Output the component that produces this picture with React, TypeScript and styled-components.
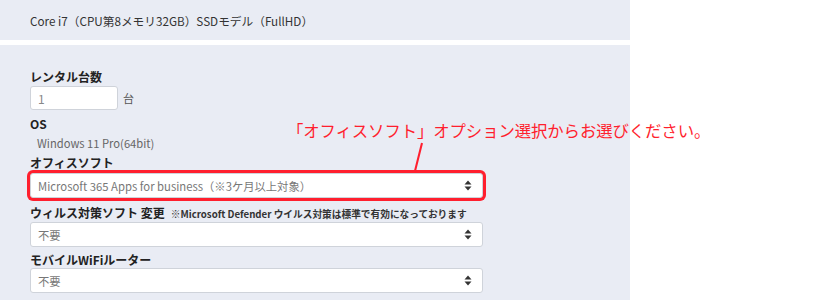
import React from "react";
import styled, { createGlobalStyle } from "styled-components";

const GlobalStyle = createGlobalStyle`
  html, body {
    margin: 0;
    padding: 0;
    background: #ffffff;
  }
  body {
    font-family: "Noto Sans CJK JP", "Noto Sans", sans-serif;
    color: #333;
  }
`;

const Page = styled.div`
  position: relative;
  width: 840px;
  height: 300px;
  overflow: hidden;
`;

const Panel = styled.section<{ $first?: boolean }>`
  width: 630px;
  box-sizing: border-box;
  background: #e9ecf4;
  margin-bottom: 5px;
  ${(p) =>
    p.$first
      ? `height: 40px; display: flex; align-items: center; padding: 0 30px;`
      : `padding: 24px 30px 20px;`}
`;

const ModelName = styled.div`
  font-size: 11.7px;
  color: #333;
`;

const Form = styled.div`
  display: flex;
  flex-direction: column;
`;

const Label = styled.div<{ $top?: number }>`
  font-size: 12px;
  font-weight: 700;
  line-height: 16px;
  color: #222;
  margin-top: ${(p) => p.$top ?? 0}px;
  display: flex;
  align-items: baseline;
  gap: 6px;
`;

const Note = styled.span`
  font-size: 9.7px;
  font-weight: 700;
  color: #333;
`;

const InputRow = styled.div`
  display: flex;
  align-items: center;
  gap: 5px;
  margin-top: 1px;
`;

const NumberInput = styled.div`
  width: 88px;
  height: 24px;
  box-sizing: border-box;
  background: #fff;
  border: 1px solid #cfd3da;
  border-radius: 3px;
  font-size: 12px;
  color: #888;
  display: flex;
  align-items: center;
  padding-left: 7px;
`;

const Unit = styled.span`
  font-size: 11px;
  color: #555;
`;

const Value = styled.div`
  font-size: 11.2px;
  color: #666;
  line-height: 16px;
  margin-top: 3px;
  padding-left: 7px;
`;

const SelectBox = styled.div<{ $highlight?: boolean; $top?: number }>`
  width: 453px;
  height: 25px;
  box-sizing: border-box;
  background: #fff;
  border: 1px solid #cfd3da;
  border-radius: 3px;
  margin-top: ${(p) => p.$top ?? 0}px;
  padding: 0 10px 0 7px;
  display: flex;
  align-items: center;
  justify-content: space-between;
  font-size: 11.3px;
  color: #777;
  ${(p) => (p.$highlight ? `box-shadow: 0 0 0 3px #ff1f2e; border-radius: 3px;` : "")}
`;

const Annotation = styled.div`
  position: absolute;
  left: 287px;
  top: 118px;
  font-size: 16.4px;
  color: #ff1f2e;
  white-space: nowrap;
  letter-spacing: -0.1px;
`;

const Pointer = styled.svg`
  position: absolute;
  left: 410px;
  top: 140px;
`;

const Arrows = () => (
  <svg width="8" height="11" viewBox="0 0 8 11">
    <path d="M4 0.5 L7.5 4.5 H0.5 Z" fill="#333" />
    <path d="M4 10.5 L7.5 6.5 H0.5 Z" fill="#333" />
  </svg>
);

function Select({ text, highlight, top }: { text: string; highlight?: boolean; top?: number }) {
  return (
    <SelectBox $highlight={highlight} $top={top}>
      <span>{text}</span>
      <Arrows />
    </SelectBox>
  );
}

export default function App() {
  return (
    <Page>
      <GlobalStyle />
      <Panel $first>
        <ModelName>Core i7（CPU第8メモリ32GB）SSDモデル（FullHD）</ModelName>
      </Panel>
      <Panel>
        <Form>
          <Label>レンタル台数</Label>
          <InputRow>
            <NumberInput>1</NumberInput>
            <Unit>台</Unit>
          </InputRow>
          <Label $top={6}>OS</Label>
          <Value>Windows 11 Pro(64bit)</Value>
          <Label $top={4}>オフィスソフト</Label>
          <Select top={2} highlight text="Microsoft 365 Apps for business（※3ケ月以上対象）" />
          <Label $top={7}>
            ウィルス対策ソフト 変更
            <Note>※Microsoft Defender ウイルス対策は標準で有効になっております</Note>
          </Label>
          <Select text="不要" />
          <Label $top={5}>モバイルWiFiルーター</Label>
          <Select text="不要" />
        </Form>
      </Panel>
      <Annotation>「オフィスソフト」オプション選択からお選びください。</Annotation>
      <Pointer width="16" height="34" viewBox="0 0 16 34">
        <line x1="12" y1="3" x2="5" y2="31" stroke="#ff1f2e" strokeWidth="2" />
      </Pointer>
    </Page>
  );
}
